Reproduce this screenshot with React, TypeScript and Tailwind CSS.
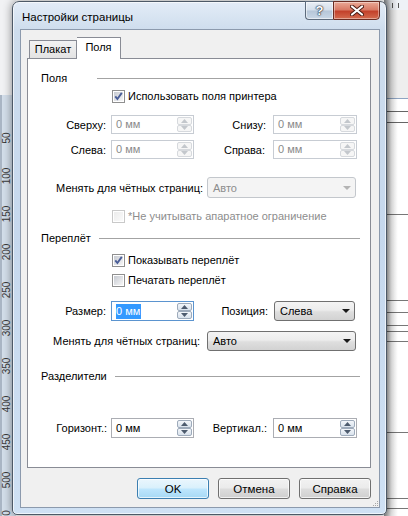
import React from "react";

function CheckBox({ checked = false, disabled = false }: { checked?: boolean; disabled?: boolean }) {
  const id = disabled ? "cbd" : "cbn";
  return (
    <svg width="13" height="13" viewBox="0 0 13 13" className="shrink-0">
      <defs>
        <linearGradient id={id} x1="0" y1="0" x2="1" y2="1">
          <stop offset="0" stopColor={disabled ? "#ececec" : "#c6cad1"} />
          <stop offset="1" stopColor={disabled ? "#fafafa" : "#f7f7f7"} />
        </linearGradient>
      </defs>
      <rect x="0.5" y="0.5" width="12" height="12" fill="#fff" stroke={disabled ? "#c9c9c9" : "#8f8f8f"} />
      <rect x="2" y="2" width="9" height="9" fill={`url(#${id})`} />
      {checked && <path d="M3.3 6.3 L5.4 9 L9.8 2.9" fill="none" stroke="#4a5e98" strokeWidth="1.9" />}
    </svg>
  );
}

function SpinBtn({ up = false, disabled = false }: { up?: boolean; disabled?: boolean }) {
  return (
    <div
      className={`flex flex-1 items-center justify-center rounded-[2px] border ${
        disabled
          ? "border-[#d6d9dd] bg-[#f6f6f6]"
          : "border-[#9eabbb] bg-[linear-gradient(to_bottom,#f3f6fa,#d9e2ec)]"
      }`}
    >
      <svg width="7" height="4" viewBox="0 0 7 4">
        <path d={up ? "M0 4 L3.5 0 L7 4 Z" : "M0 0 L7 0 L3.5 4 Z"} fill={disabled ? "#c3c7cc" : "#4d5b6e"} />
      </svg>
    </div>
  );
}

function SpinInput({
  disabled = false,
  focused = false,
  className = "",
}: {
  disabled?: boolean;
  focused?: boolean;
  className?: string;
}) {
  return (
    <div
      className={`flex shrink-0 border bg-white ${
        focused ? "border-[#5b94cf]" : disabled ? "border-[#c7ccd3]" : "border-[#abadb3]"
      } ${className}`}
    >
      <div className="flex flex-1 items-center pl-[4px] leading-none">
        {focused ? (
          <span className="bg-[#3399ff] py-[2px] pr-px text-white">0 мм</span>
        ) : (
          <span className={disabled ? "text-[#8a8a8a]" : "text-black"}>0 мм</span>
        )}
      </div>
      <div className="my-[1px] mr-[1px] flex w-[15px] flex-col">
        <SpinBtn up disabled={disabled} />
        <SpinBtn disabled={disabled} />
      </div>
    </div>
  );
}

function Select({ value, disabled = false, className = "" }: { value: string; disabled?: boolean; className?: string }) {
  return (
    <div
      className={`flex shrink-0 items-center justify-between rounded-[3px] border pl-[5px] pr-[4px] ${
        disabled
          ? "border-[#c3c7cc] bg-[#f4f4f4] text-[#8d8d8d]"
          : "border-[#707070] bg-[linear-gradient(to_bottom,#f4f4f4_0%,#ececec_45%,#dedede_55%,#d2d2d2_100%)] text-black"
      } ${className}`}
    >
      <span>{value}</span>
      <svg width="8" height="4" viewBox="0 0 8 4">
        <path d="M0 0 H8 L4 4 Z" fill={disabled ? "#b4b4b4" : "#1a1a1a"} />
      </svg>
    </div>
  );
}

function Section({ label, labelW, className = "" }: { label: string; labelW: string; className?: string }) {
  return (
    <div className={`ml-[13px] mr-[10px] flex h-[16px] items-center ${className}`}>
      <span className={`shrink-0 ${labelW}`}>{label}</span>
      <div className="h-px flex-1 bg-[#a3a3a3]" />
    </div>
  );
}

function CheckRow({
  label,
  checked = false,
  disabled = false,
  className = "",
}: {
  label: string;
  checked?: boolean;
  disabled?: boolean;
  className?: string;
}) {
  return (
    <div className={`ml-[84px] flex h-[16px] items-center gap-[3px] ${className}`}>
      <CheckBox checked={checked} disabled={disabled} />
      <span className={disabled ? "text-[#8d8d8d]" : "text-black"}>{label}</span>
    </div>
  );
}

function WinButton({ label, isDefault = false }: { label: string; isDefault?: boolean }) {
  return (
    <div
      className={`flex h-[21px] w-[72px] items-center justify-center rounded-[3px] border ${
        isDefault
          ? "border-[#3c7fb1] bg-[linear-gradient(to_bottom,#eaf6fd_0%,#d9f0fc_48%,#bee6fd_52%,#a7d9f5_100%)] shadow-[inset_0_0_0_1px_rgba(255,255,255,0.7)]"
          : "border-[#707070] bg-[linear-gradient(to_bottom,#f2f2f2_0%,#ebebeb_48%,#dddddd_52%,#cfcfcf_100%)] shadow-[inset_0_0_0_1px_rgba(255,255,255,0.7)]"
      }`}
    >
      {label}
    </div>
  );
}

const rulerNums = [
  { n: "50", y: 138 },
  { n: "100", y: 176 },
  { n: "150", y: 214 },
  { n: "200", y: 252 },
  { n: "250", y: 290 },
  { n: "300", y: 328 },
  { n: "350", y: 366 },
  { n: "400", y: 404 },
  { n: "450", y: 442 },
  { n: "500", y: 480 },
  { n: "0", y: 513 },
];

function Desktop() {
  return (
    <>
      {/* left vertical ruler */}
      <div className="absolute left-0 top-0 h-full w-[16px] bg-[#f1f2f4]">
        <div className="absolute bottom-0 left-0 top-[95px] w-full border-l-2 border-[#a9b5c4] bg-[#d3deea]" />
        {rulerNums.map((r) => (
          <div
            key={r.n}
            className="absolute left-[2px] flex w-[10px] -translate-y-1/2 rotate-180 items-center justify-center text-[10px] leading-none text-[#3a3a3a] [writing-mode:vertical-rl]"
            style={{ top: r.y }}
          >
            {r.n}
          </div>
        ))}
      </div>
      {/* right page area */}
      <div className="absolute right-0 top-0 h-full w-[24px] bg-white">
        <div className="h-[10px] bg-[#eef2f7]" />
        <div className="absolute left-[8px] top-[3px] h-[5px] w-px bg-[#555]" />
        <div className="absolute left-[14px] top-[3px] h-[5px] w-px bg-[#555]" />
        <div className="absolute left-0 right-0 top-[10px] h-[88px] bg-[#eeeeee]" />
        <div className="absolute left-0 right-0 top-[98px] h-px bg-[#8ea4c2]" />
        <div className="absolute left-0 right-0 top-[111px] h-px bg-[#666]" />
        <div className="absolute left-0 right-0 top-[122px] h-px bg-[#666]" />
        <div className="absolute left-0 right-0 top-[214px] h-px bg-[#777]" />
        <div className="absolute left-0 right-0 top-[300px] h-px bg-[#777]" />
        <div className="absolute left-0 right-0 top-[312px] h-px bg-[#777]" />
        <div className="absolute left-0 right-0 top-[325px] h-px bg-[#777]" />
        <div className="absolute left-0 right-0 top-[331px] h-px bg-[#777]" />
        <div className="absolute left-0 right-0 top-[341px] h-px bg-[#777]" />
        <div className="absolute left-0 right-0 top-[432px] h-px bg-[#777]" />
        <div className="absolute left-0 right-0 top-[498px] h-px bg-[#777]" />
        <div className="absolute left-0 right-0 top-[508px] h-px bg-[#777]" />
        <div className="absolute bottom-0 left-0 top-0 w-[14px] bg-[linear-gradient(to_right,rgba(0,0,0,0.45),rgba(0,0,0,0.12)_50%,rgba(0,0,0,0))]" />
      </div>
    </>
  );
}

function Dialog() {
  return (
    <div className="absolute left-[12px] top-[1px] flex h-[514px] w-[375px] flex-col rounded-b-[5px] rounded-t-[7px] border border-[#4d5967] bg-[linear-gradient(to_bottom,#e3ecf7_0px,#cedded_28px,#c6d8ed_45%,#cfe1f4_100%)] shadow-[0_0_10px_rgba(0,0,0,0.45),inset_0_0_0_1px_rgba(255,255,255,0.65)]">
      {/* title bar */}
      <div className="flex h-[27px] shrink-0 items-start justify-between">
        <div className="ml-[9px] mt-[7px] text-[11.5px] leading-[16px]">Настройки страницы</div>
        <div className="-mt-px mr-[6px] flex">
          <div className="flex h-[19px] w-[28px] items-center justify-center rounded-bl-[4px] border border-r-0 border-[#5d6b7c] bg-[linear-gradient(to_bottom,#e9eef5_0%,#d4dfeb_48%,#b6c6d8_52%,#c9d7e6_100%)] shadow-[inset_0_0_0_1px_rgba(255,255,255,0.55)]">
            <span className="text-[13px] font-bold leading-none text-white [text-shadow:0_0_1px_#1f2a38,0_0_1px_#1f2a38,0_0_2px_#1f2a38]">?</span>
          </div>
          <div className="flex h-[19px] w-[47px] items-center justify-center rounded-br-[4px] border border-[#6b2c22] bg-[linear-gradient(to_bottom,#eaa996_0%,#d97b66_45%,#c3412b_55%,#d46b4f_100%)] shadow-[inset_0_0_0_1px_rgba(255,255,255,0.4)]">
            <svg width="14" height="11" viewBox="0 0 14 11">
              <path d="M2 1.5 L12 9.5 M12 1.5 L2 9.5" stroke="#4a1a12" strokeWidth="4" strokeLinecap="round" />
              <path d="M2 1.5 L12 9.5 M12 1.5 L2 9.5" stroke="#ffffff" strokeWidth="2.2" strokeLinecap="round" />
            </svg>
          </div>
        </div>
      </div>

      {/* client area */}
      <div className="relative mb-[6px] ml-[7px] mr-[6px] flex flex-1 flex-col border border-[#8c9aad] bg-[#f0f0f0] pl-[6px] pr-[8px] pt-[7px]">
        {/* tabs */}
        <div className="relative z-10 flex h-[21px] items-end pl-[2px]">
          <div className="flex h-[18px] w-[48px] items-center justify-center border border-b-0 border-[#898c95] bg-[linear-gradient(to_bottom,#f2f2f2,#e3e3e3)] pb-px">
            Плакат
          </div>
          <div className="-mb-px flex h-[22px] w-[44px] items-start justify-center border border-b-0 border-l-0 border-[#898c95] bg-white pt-[1px]">
            Поля
          </div>
        </div>

        {/* tab panel */}
        <div className="flex h-[410px] flex-col border border-[#898c95] bg-white">
          <Section label="Поля" labelW="w-[56px]" className="mt-[11px]" />
          <CheckRow label="Использовать поля принтера" checked className="mt-[2px]" />

          <div className="mt-[11px] flex h-[19px] items-center">
            <span className="w-[78px] shrink-0 text-right">Сверху:</span>
            <SpinInput disabled className="ml-[5px] h-[19px] w-[83px]" />
            <span className="w-[72px] shrink-0 text-right">Снизу:</span>
            <SpinInput disabled className="ml-[7px] h-[19px] w-[84px]" />
          </div>
          <div className="mt-[6px] flex h-[19px] items-center">
            <span className="w-[78px] shrink-0 text-right">Слева:</span>
            <SpinInput disabled className="ml-[5px] h-[19px] w-[83px]" />
            <span className="w-[71px] shrink-0 text-right">Справа:</span>
            <SpinInput disabled className="ml-[8px] h-[19px] w-[84px]" />
          </div>

          <div className="mt-[18px] flex h-[21px] items-center">
            <span className="w-[175px] shrink-0 text-right">Менять для чётных страниц:</span>
            <Select value="Авто" disabled className="ml-[4px] h-[21px] w-[149px]" />
          </div>

          <CheckRow label="*Не учитывать апаратное ограничение" disabled className="mt-[10px]" />

          <Section label="Переплёт" labelW="w-[58px]" className="mt-[6px]" />
          <CheckRow label="Показывать переплёт" checked className="mt-[6px]" />
          <CheckRow label="Печатать переплёт" className="mt-[4px]" />

          <div className="mt-[13px] flex h-[20px] items-center">
            <span className="w-[78px] shrink-0 text-right">Размер:</span>
            <SpinInput focused className="ml-[5px] h-[20px] w-[83px]" />
            <span className="w-[74px] shrink-0 text-right">Позиция:</span>
            <Select value="Слева" className="ml-[6px] h-[20px] w-[81px]" />
          </div>

          <div className="mt-[10px] flex h-[20px] items-center">
            <span className="w-[172px] shrink-0 text-right">Менять для чётных страниц:</span>
            <Select value="Авто" className="ml-[7px] h-[20px] w-[149px]" />
          </div>

          <Section label="Разделители" labelW="w-[74px]" className="mt-[17px]" />

          <div className="mt-[34px] flex h-[20px] items-center">
            <span className="w-[79px] shrink-0 text-right">Горизонт.:</span>
            <SpinInput className="ml-[4px] h-[20px] w-[83px]" />
            <span className="w-[73px] shrink-0 text-right">Вертикал.:</span>
            <SpinInput className="ml-[6px] h-[20px] w-[84px]" />
          </div>
        </div>

        {/* buttons */}
        <div className="mt-[10px] flex justify-end gap-[9px] text-[11.5px]">
          <WinButton label="OK" isDefault />
          <WinButton label="Отмена" />
          <WinButton label="Справка" />
        </div>

        {/* size grip */}
        <div className="absolute bottom-[1px] right-[1px] grid grid-cols-3 gap-[1px]">
          {[0, 0, 1, 0, 1, 1, 1, 1, 1].map((v, i) => (
            <div key={i} className={`h-px w-px ${v ? "bg-[#a6a6a6]" : "bg-transparent"}`} />
          ))}
        </div>
      </div>
    </div>
  );
}

export default function App() {
  return (
    <div className="relative h-[516px] w-[408px] overflow-hidden bg-white font-['Liberation_Sans',Arial,sans-serif] text-[11px] leading-[16px] text-black">
      <Desktop />
      <Dialog />
    </div>
  );
}
